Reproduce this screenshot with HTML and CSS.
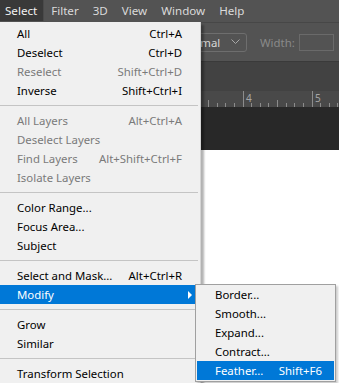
FILE: index.html
```html
<!DOCTYPE html>
<html lang="en">
<head>
  <meta charset="UTF-8" />
  <title>Select menu</title>
  <meta name="viewport" content="width=device-width, initial-scale=1" />
  <link rel="stylesheet" href="styles.css">
</head>
<body>
  <div class="app">
    <div class="menubar">
      <span class="mb-item active">Select</span>
      <span class="mb-item">Filter</span>
      <span class="mb-item">3D</span>
      <span class="mb-item">View</span>
      <span class="mb-item">Window</span>
      <span class="mb-item">Help</span>
    </div>

    <div class="options">
      <div class="dropdown">
        <span>Normal</span>
        <svg width="9" height="6" viewBox="0 0 9 6"><path d="M0.5 0.5 L4.5 4.5 L8.5 0.5" fill="none" stroke="#a8a8a8" stroke-width="1"/></svg>
      </div>
      <span class="opt-label">Width:</span>
      <span class="opt-input"></span>
    </div>

    <div class="tabs"></div>

    <div class="ruler">
      <svg width="339" height="16" viewBox="0 0 339 16">
        <path d="M174.5 0V16 M182.5 12V16 M191.5 12V16 M199.5 12V16 M208.5 9V16 M217.5 12V16 M225.5 12V16 M234.5 12V16
                 M243.5 0V16 M251.5 12V16 M260.5 12V16 M268.5 12V16 M277.5 9V16 M286.5 12V16 M294.5 12V16 M303.5 12V16
                 M312.5 0V16 M320.5 12V16 M329.5 12V16 M337.5 12V16" stroke="#8c8c8c" stroke-width="1"/>
        <text x="246" y="11" class="ruler-num">4</text>
        <text x="315" y="11" class="ruler-num">5</text>
      </svg>
    </div>

    <div class="pasteboard"></div>
    <div class="canvas"></div>
  </div>

  <div class="menu">
    <div class="mi"><span>All</span><span>Ctrl+A</span></div>
    <div class="mi"><span>Deselect</span><span>Ctrl+D</span></div>
    <div class="mi off"><span>Reselect</span><span>Shift+Ctrl+D</span></div>
    <div class="mi"><span>Inverse</span><span>Shift+Ctrl+I</span></div>
    <div class="sep"></div>
    <div class="mi off"><span>All Layers</span><span>Alt+Ctrl+A</span></div>
    <div class="mi off"><span>Deselect Layers</span></div>
    <div class="mi off"><span>Find Layers</span><span>Alt+Shift+Ctrl+F</span></div>
    <div class="mi off"><span>Isolate Layers</span></div>
    <div class="sep"></div>
    <div class="mi"><span>Color Range...</span></div>
    <div class="mi"><span>Focus Area...</span></div>
    <div class="mi"><span>Subject</span></div>
    <div class="sep"></div>
    <div class="mi"><span>Select and Mask...</span><span>Alt+Ctrl+R</span></div>
    <div class="mi hl"><span>Modify</span><span class="arrow"></span></div>
    <div class="sep"></div>
    <div class="mi"><span>Grow</span></div>
    <div class="mi"><span>Similar</span></div>
    <div class="sep"></div>
    <div class="mi"><span>Transform Selection</span></div>
  </div>

  <div class="submenu">
    <div class="mi"><span>Border...</span></div>
    <div class="mi"><span>Smooth...</span></div>
    <div class="mi"><span>Expand...</span></div>
    <div class="mi"><span>Contract...</span></div>
    <div class="mi hl"><span>Feather...</span><span>Shift+F6</span></div>
  </div>
</body>
</html>
```

FILE: styles.css
```css
html, body {
  margin: 0;
  height: 100%;
  overflow: hidden;
}
body {
  font-family: 'Noto Sans', sans-serif;
  font-size: 11.4px;
  background: #282828;
}
.app {
  height: 383px;
  display: flex;
  flex-direction: column;
}
.menubar {
  height: 22px;
  flex: none;
  display: flex;
  background: #535353;
  color: #dadada;
  font-size: 11.6px;
  box-sizing: border-box;
}
.mb-item {
  line-height: 21px;
  height: 21px;
  padding: 0 7px;
}
.mb-item:first-child {
  padding-left: 5px;
}
.mb-item.active {
  background: #393939;
  color: #f2f2f2;
  box-shadow: inset -1px 0 0 #4a4a4a;
}
.options {
  height: 39px;
  flex: none;
  display: flex;
  align-items: center;
  background: #535353;
  box-sizing: border-box;
  padding-left: 170px;
  border-top: 1px solid #474747;
}
.dropdown {
  width: 77px;
  height: 19px;
  box-sizing: border-box;
  border: 1px solid #6e6e6e;
  border-radius: 3px;
  display: flex;
  align-items: center;
  justify-content: space-between;
  padding: 0 6px 0 9px;
  color: #d6d6d6;
}
.opt-label {
  margin-left: 13px;
  color: #8a8a8a;
}
.opt-input {
  margin-left: 4px;
  width: 35px;
  height: 17px;
  box-sizing: border-box;
  border: 1px solid #6a6a6a;
}
.tabs {
  height: 30px;
  flex: none;
  background: #424242;
  border-top: 1px solid #3a3a3a;
  box-sizing: border-box;
}
.ruler {
  height: 16px;
  flex: none;
  background: #494949;
}
.ruler svg {
  display: block;
}
.ruler-num {
  font-family: 'Noto Sans', sans-serif;
  font-size: 10px;
  fill: #a6a6a6;
}
.pasteboard {
  height: 43px;
  flex: none;
  background: #282828;
}
.canvas {
  flex: 1;
  background: #ffffff;
}

/* dropdown menus */
.menu, .submenu {
  position: absolute;
  background: #f0f0f0;
  color: #000;
  box-sizing: border-box;
}
.menu {
  top: 22px;
  left: 0;
  width: 201px;
  padding: 2px 2px 0 0;
  border-right: 1px solid #d4d4d4;
  box-shadow: 3px 3px 2px rgba(0, 0, 0, 0.3);
}
.submenu {
  top: 284px;
  left: 195px;
  width: 141px;
  padding: 0 1px 1px;
  border: 1px solid #a0a0a0;
  box-shadow: 2px 2px 2px rgba(0, 0, 0, 0.2);
}
.mi {
  height: 19px;
  line-height: 19px;
  display: flex;
  justify-content: space-between;
  padding: 0 16px 0 17px;
  white-space: nowrap;
}
.submenu .mi {
  padding: 0 12px 0 18px;
}
.mi.off {
  color: #7a7a7a;
}
.mi.hl {
  background: #0078d7;
  color: #fff;
}
.sep {
  height: 11px;
  box-sizing: border-box;
  border-top: 5px solid transparent;
  border-bottom: 5px solid transparent;
  background: #c4c4c4;
  background-clip: padding-box;
}
.arrow {
  align-self: center;
  width: 0;
  height: 0;
  margin-right: -10px;
  border-left: 4px solid #fff;
  border-top: 4px solid transparent;
  border-bottom: 4px solid transparent;
}
```
